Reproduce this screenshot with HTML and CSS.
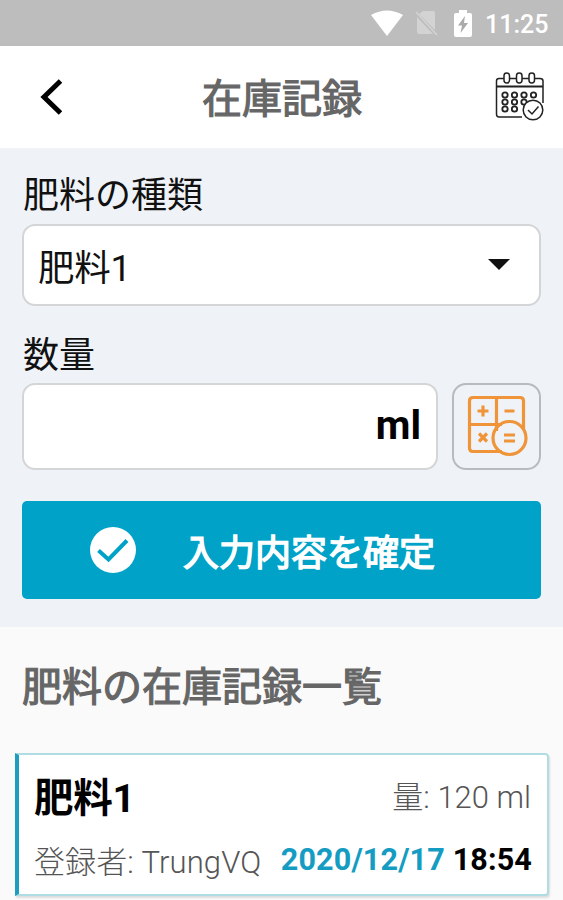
FILE: index.html
```html
<!DOCTYPE html>
<html lang="ja">
<head>
<meta charset="utf-8">
<meta name="viewport" content="width=device-width, initial-scale=1">
<title>在庫記録</title>
<link rel="stylesheet" href="styles.css">
</head>
<body>
<div class="status">
  <svg class="wifi" width="32" height="26" viewBox="0 0 32 26"><path d="M0 5Q16-4 32 5L16 26Z" fill="#fff"/></svg>
  <svg class="sim" width="24" height="26" viewBox="0 0 24 26"><path d="M8 1H18Q20 1 20 3V20L4 4ZM2 7L18 24H4Q2 24 2 22Z" fill="#d3d3d3"/><path d="M1 2L22 25" stroke="#d3d3d3" stroke-width="1.6"/></svg>
  <svg class="battery" width="18" height="27" viewBox="0 0 18 27"><path d="M5 0H13V3H16Q18 3 18 5V25Q18 27 16 27H2Q0 27 0 25V5Q0 3 2 3H5Z" fill="#fff"/><path d="M11 6L4 15.500H8L6.500 23L14 13H10Z" fill="#aaa"/></svg>
  <span class="clock">11:25</span>
</div>
<header class="header">
  <svg class="back" width="24" height="38" viewBox="0 0 24 38"><path d="M22.500 3L6 19L22.500 35" fill="none" stroke="#000" stroke-width="5"/></svg>
  <h1 class="title">在庫記録</h1>
  <svg class="calendar" width="50" height="50" viewBox="0 0 50 50" fill="none" stroke="#222" stroke-width="1.500">
    <path d="M9 6.500H4Q1.500 6.500 1.500 9V42Q1.500 45 4 45H27M14 6.500H21.500M27 6.500H34M40 6.500H45Q48 6.500 48 9V31"/>
    <path d="M1.500 14.500H48" stroke-width="2"/>
    <g><rect x="9" y="1" width="5.500" height="10" rx="2.700"/><rect x="21.500" y="1" width="5.500" height="10" rx="2.700"/><rect x="34" y="1" width="5.500" height="10" rx="2.700"/></g>
    <g stroke-width="1.800"><circle cx="10" cy="23" r="2.700"/><circle cx="19.500" cy="23" r="2.700"/><circle cx="29" cy="23" r="2.700"/><circle cx="38.500" cy="23" r="2.700"/><circle cx="10" cy="30" r="2.700"/><circle cx="19.500" cy="30" r="2.700"/><circle cx="29" cy="30" r="2.700"/><circle cx="10" cy="37" r="2.700"/><circle cx="19.500" cy="37" r="2.700"/></g>
    <circle cx="38" cy="38" r="9.800" fill="#fff"/><path d="M33 38L37 42L43.500 34.500"/>
  </svg>
</header>
<main>
  <section class="form">
    <div class="label">肥料の種類</div>
    <div class="select"><span>肥料1</span><svg width="22" height="12" viewBox="0 0 22 12"><path d="M0 0H22L11 11Z" fill="#111"/></svg></div>
    <div class="label amount-label">数量</div>
    <div class="amount">
      <div class="field">ml</div>
      <div class="calc">
        <svg width="62" height="62" viewBox="0 0 62 62" fill="none" stroke="#ef9439" stroke-width="3.200">
          <path d="M35 56.500H6Q2.500 56.500 2.500 53V6Q2.500 2.500 6 2.500H53Q56.500 2.500 56.500 6V35M29.500 2.500V36M2.500 29.500H35"/>
          <path d="M10.500 16H21.500M16 10.500V21.500M37.500 16H47.500M12 38.500L20 46.500M20 38.500L12 46.500"/>
          <circle cx="42.500" cy="43" r="16.500"/><path d="M37 40H48M37 46H48"/>
        </svg>
      </div>
    </div>
    <div class="submit">
      <svg width="46" height="46" viewBox="0 0 46 46"><circle cx="23" cy="23" r="23" fill="#fff"/><path d="M8.500 23.500L18.500 32.500L37 13.500" fill="none" stroke="#00a2c8" stroke-width="4"/></svg>
      <span>入力内容を確定</span>
    </div>
  </section>
  <section class="list">
    <h2 class="heading">肥料の在庫記録一覧</h2>
    <article class="card">
      <div class="row top"><span class="name">肥料1</span><span class="qty">量: 120 ml</span></div>
      <div class="row bottom"><span class="user">登録者: TrungVQ</span><span class="when"><span class="date">2020/12/17</span> 18:54</span></div>
    </article>
  </section>
</main>
</body>
</html>
```
FILE: styles.css
```css
* { box-sizing: border-box; }
body { margin: 0; height: 900px; overflow: hidden; background: #fafafa; color: #111; font-family: Roboto, "Noto Sans CJK JP", sans-serif; }
svg { display: block; flex: none; }
span, h1, h2 { white-space: nowrap; }
.status { height: 46px; background: #bdbdbd; display: flex; align-items: center; padding-left: 371px; }
.sim { margin-left: 12px; }
.battery { margin-left: 15px; }
.clock { margin-left: 13px; color: #fff; font-size: 25px; font-weight: 500; line-height: 30px; padding-top: 3px; }
.header { height: 102px; background: #fff; display: flex; align-items: center; justify-content: space-between; padding: 0 18px 0 38px; }
.title { margin: 0 0 0 7px; padding-top: 5px; font-size: 40px; line-height: 60px; font-weight: 400; -webkit-text-stroke: 1.200px #666; color: #666; }
.form { height: 479px; background: #eff3f8; padding: 20px 22px 0; }
.label { font-size: 36px; line-height: 55px; height: 50px; margin-top: 1px; padding-left: 1px; }
.select { height: 82px; margin-top: 5px; background: #fff; border: 2px solid #d4d5d6; border-radius: 13px; display: flex; align-items: center; justify-content: space-between; padding: 0 29px 0 14px; font-size: 36.500px; letter-spacing: -.3px; }
.amount-label { margin-top: 23px; }
.amount { display: flex; gap: 14px; height: 87px; margin-top: 4px; }
.field { flex: 1; background: #fff; border: 2px solid #d4d5d6; border-radius: 13px; display: flex; align-items: center; justify-content: flex-end; padding: 0 15px 2px 0; font-size: 40px; font-weight: 700; color: #000; }
.calc { width: 89px; border: 2px solid #b8bbbe; border-radius: 14px; display: flex; align-items: center; justify-content: center; padding: 0 0 1px 3px; }
.submit { height: 98px; margin-top: 31px; border-radius: 5px; background: #00a2c8; color: #fff; display: flex; align-items: center; gap: 47px; padding-left: 68px; font-size: 36px; -webkit-text-stroke: 1.400px #fff; }
.list { padding: 28px 14px 0 15px; }
.heading { margin: 0 0 0 7px; font-size: 40px; line-height: 65px; height: 60px; font-weight: 400; -webkit-text-stroke: 1.200px #666; color: #666; }
.card { margin-top: 38px; height: 143px; background: #fff; border: 2px solid #b0dce3; border-left: 4px solid #1c9fbe; border-radius: 0 4px 4px 0; box-shadow: 1px 2px 2px #ddd; padding: 9px 16px 0 15px; }
.row { display: flex; justify-content: space-between; align-items: center; }
.top { height: 60px; }
.bottom { height: 60px; margin-top: 5px; }
.name { font-size: 39.500px; font-weight: 700; letter-spacing: -.3px; color: #000; }
.qty, .user { font-size: 31px; font-weight: 300; color: #555; }
.user { letter-spacing: .1px; }
.when { font-size: 30.500px; font-weight: 700; letter-spacing: .15px; color: #000; margin-right: -1px; padding-top: 1px; }
.date { color: #149cc2; }
```
